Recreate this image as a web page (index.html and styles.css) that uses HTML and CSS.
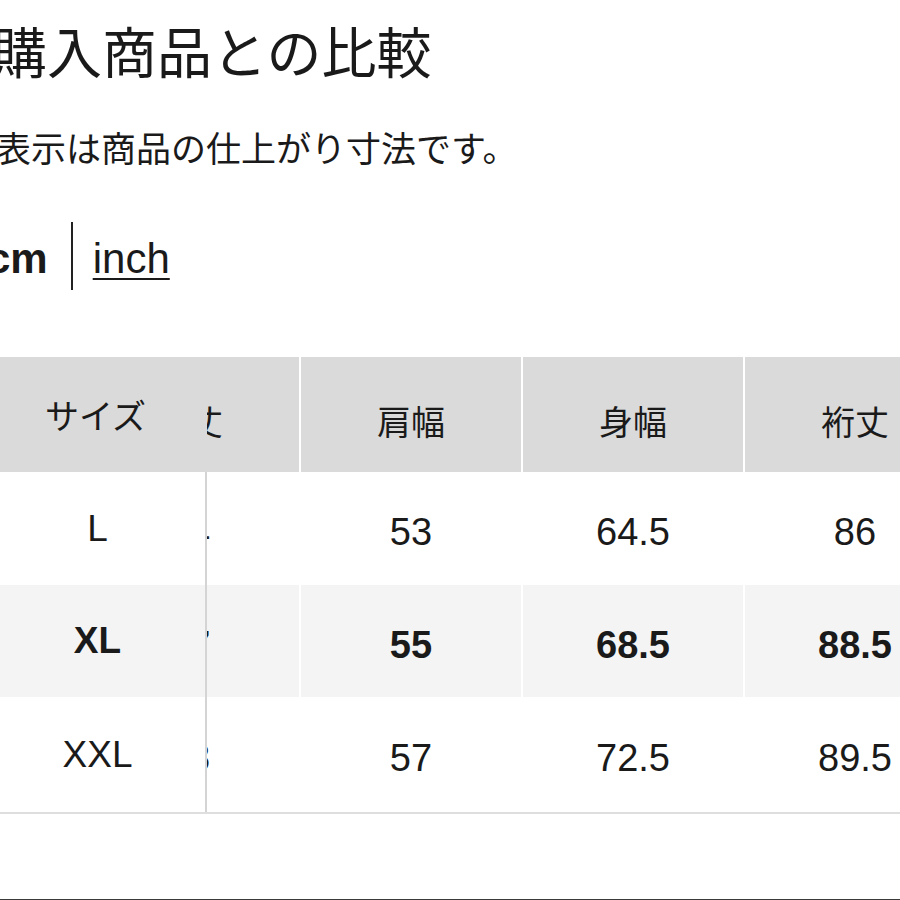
FILE: index.html
```html
<!DOCTYPE html>
<html lang="ja">
<head>
<meta charset="utf-8">
<title>購入商品との比較</title>
<link rel="stylesheet" href="styles.css">
</head>
<body>
<main class="page">
  <h1 class="title">購入商品との比較</h1>
  <p class="note">表示は商品の仕上がり寸法です。</p>
  <div class="units">
    <span class="unit unit--active">cm</span>
    <span class="unit-divider"></span>
    <a class="unit unit--link" href="#">inch</a>
  </div>

  <div class="size-table">
    <div class="data">
      <div class="row row--head">
        <div class="cell">着丈</div>
        <div class="cell">肩幅</div>
        <div class="cell">身幅</div>
        <div class="cell">裄丈</div>
      </div>
      <div class="row row--l">
        <div class="cell">74</div>
        <div class="cell">53</div>
        <div class="cell">64.5</div>
        <div class="cell">86</div>
      </div>
      <div class="row row--xl row--current">
        <div class="cell">77</div>
        <div class="cell">55</div>
        <div class="cell">68.5</div>
        <div class="cell">88.5</div>
      </div>
      <div class="row row--xxl">
        <div class="cell">78</div>
        <div class="cell">57</div>
        <div class="cell">72.5</div>
        <div class="cell">89.5</div>
      </div>
    </div>
    <div class="sticky-col">
      <div class="scell scell--head">サイズ</div>
      <div class="scell row--l">L</div>
      <div class="scell row--xl row--current">XL</div>
      <div class="scell row--xxl">XXL</div>
    </div>
  </div>

  <div class="bottom-rule"></div>
</main>
</body>
</html>
```

FILE: styles.css
```css
html, body {
  margin: 0;
  padding: 0;
  background: #ffffff;
}

body {
  width: 900px;
  height: 900px;
  overflow: hidden;
  color: #1a1a1a;
  font-family: "Liberation Sans", "Noto Sans CJK JP", sans-serif;
}

.page {
  display: flex;
  flex-direction: column;
  width: 900px;
  overflow: hidden;
}

.title {
  margin: 22px 0 0 -8px;
  font-family: "Noto Sans CJK JP", sans-serif;
  font-weight: 400;
  font-size: 55px;
  line-height: 1;
  white-space: nowrap;
  color: #1a1a1a;
}

.note {
  margin: 52px 0 0 -4px;
  font-family: "Noto Sans CJK JP", sans-serif;
  font-size: 35px;
  line-height: 1;
  white-space: nowrap;
  color: #1a1a1a;
}

.units {
  display: flex;
  align-items: center;
  height: 68px;
  margin: 58px 0 0 -13px;
}

.unit {
  font-family: "Liberation Sans", sans-serif;
  font-size: 42px;
  line-height: 1;
  padding-top: 6px;
  color: #1a1a1a;
}

.unit--active {
  font-weight: 700;
}

.unit-divider {
  width: 2px;
  height: 68px;
  margin: 0 20px 0 23px;
  background: #222;
}

.unit--link {
  text-decoration: underline;
  text-decoration-thickness: 2px;
  text-underline-offset: 5px;
}

.size-table {
  position: relative;
  margin-top: 67px;
  border-bottom: 2px solid #dedede;
  overflow: hidden;
}

.data {
  display: flex;
  flex-direction: column;
  padding-left: 79px;
}

.row {
  display: grid;
  grid-template-columns: repeat(4, 220px);
  column-gap: 2px;
}

.cell {
  display: flex;
  align-items: center;
  justify-content: center;
  font-size: 38px;
  padding-top: 8px;
  box-sizing: border-box;
}

.row--head .cell {
  height: 115px;
  background: #dadada;
  font-family: "Noto Sans CJK JP", sans-serif;
  font-size: 34px;
  padding-top: 12px;
}

.row--l .cell { height: 113px; }
.row--xl .cell { height: 112px; }
.row--xxl .cell { height: 115px; }

.row--current .cell,
.scell.row--current {
  background: #f4f4f4;
  font-weight: 700;
}

.sticky-col {
  position: absolute;
  top: 0;
  left: 0;
  display: flex;
  flex-direction: column;
  width: 207px;
}

.scell {
  display: flex;
  align-items: center;
  justify-content: center;
  box-sizing: border-box;
  padding-right: 10px;
  background: #ffffff;
  border-right: 2px solid #d4d4d4;
  font-size: 37px;
}

.scell--head {
  height: 115px;
  background: #dadada;
  border-right: 0;
  padding-right: 16px;
  font-family: "Noto Sans CJK JP", sans-serif;
  font-size: 34px;
}

.scell.row--l { height: 113px; }
.scell.row--xl { height: 112px; }
.scell.row--xxl { height: 115px; }

.bottom-rule {
  height: 2px;
  margin-top: 85px;
  background: #3a3a3a;
}
```
